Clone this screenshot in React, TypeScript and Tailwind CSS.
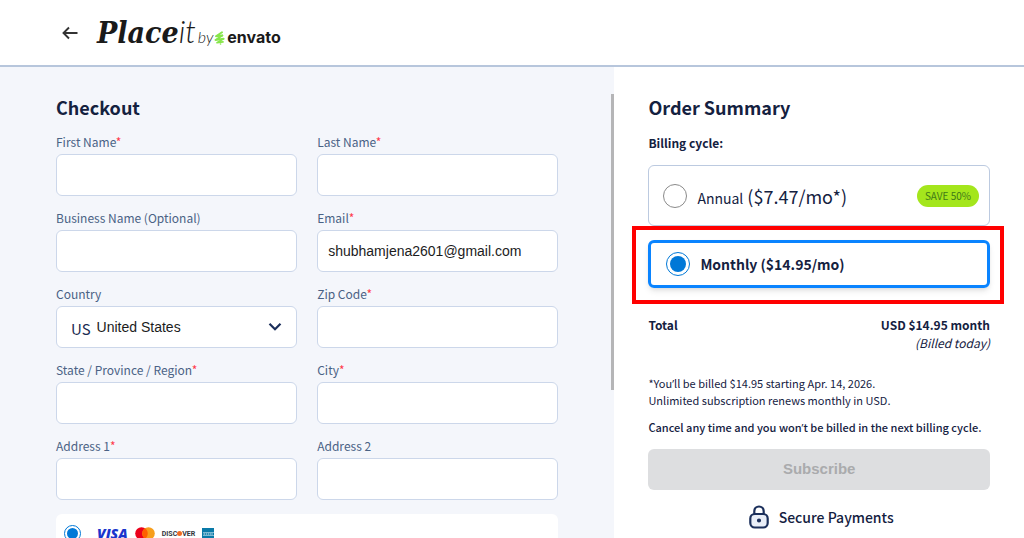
import React, { useState } from 'react';
import { clsx } from 'clsx';

interface FieldProps {
  id: string;
  label: string;
  required?: boolean;
  type?: string;
  defaultValue?: string;
}

type Cycle = 'annual' | 'monthly';

const FIELDS_TOP: FieldProps[] = [
  { id: 'first-name', label: 'First Name', required: true },
  { id: 'last-name', label: 'Last Name', required: true },
  { id: 'business', label: 'Business Name (Optional)' },
  { id: 'email', label: 'Email', required: true, type: 'email', defaultValue: 'shubhamjena2601@gmail.com' },
];

const FIELDS_BOTTOM: FieldProps[] = [
  { id: 'zip', label: 'Zip Code', required: true },
  { id: 'state', label: 'State / Province / Region', required: true },
  { id: 'city', label: 'City', required: true },
  { id: 'address-1', label: 'Address 1', required: true },
  { id: 'address-2', label: 'Address 2' },
];

const FieldLabel: React.FC<{ id: string; label: string; required?: boolean }> = ({ id, label, required }) => (
  <label htmlFor={id} className="h-6 text-xs leading-6 text-[#4a6285]">
    {label}
    {required && <span className="text-[#ff3b4b]">*</span>}
  </label>
);

const Field: React.FC<FieldProps> = ({ id, label, required, type = 'text', defaultValue }) => (
  <div className="flex flex-col">
    <FieldLabel id={id} label={label} required={required} />
    <input
      id={id}
      type={type}
      defaultValue={defaultValue}
      className="h-[42px] w-full rounded-md border border-[#ccd7ea] bg-white px-2.5 font-['Liberation_Sans',sans-serif] text-sm text-[#1c1c1c] outline-none focus:border-[#0a84ff]"
    />
  </div>
);

const CountryField = () => (
  <div className="flex flex-col">
    <FieldLabel id="country" label="Country" />
    <div className="relative flex h-[42px] items-center rounded-md border border-[#ccd7ea] bg-white pl-3.5">
      <span className="pt-1 text-[15px] leading-5 text-[#1b2b52]">US</span>
      <select
        id="country"
        className="h-full flex-1 appearance-none bg-transparent pl-1.5 font-['Liberation_Sans',sans-serif] text-sm text-[#1c1c1c] outline-none"
      >
        <option>United States</option>
        <option>Canada</option>
        <option>Mexico</option>
      </select>
      <svg viewBox="0 0 14 10" className="pointer-events-none absolute right-3.5 h-2.5 w-3.5" fill="none" stroke="#1b2f5b" strokeWidth="2.2">
        <path d="M1.500 1.800 7 7.300l5.500-5.500" />
      </svg>
    </div>
  </div>
);

const Logo = () => (
  <a href="#home" aria-label="Placeit by Envato" className="mt-0.5 flex items-baseline text-[#1a1a1a]">
    <span className="font-['DejaVu_Serif_Condensed','DejaVu_Serif',serif] text-[30px] leading-9 font-bold italic">Place</span>
    <span className="font-['Lato',sans-serif] text-[31px] leading-9 font-light italic">it</span>
    <span className="ml-0.5 font-['Lato',sans-serif] text-base leading-9 font-light italic">by</span>
    <svg viewBox="0 0 11 14" className="ml-px h-3.5 w-[11px] translate-y-0.5" fill="none" stroke="#87e64b" strokeLinecap="round" strokeLinejoin="round">
      <path d="M8 1.200 2 5.300l6.300-.8" strokeWidth="1.900" />
      <path d="M8.300 4.500 1.500 9l8-1.200" strokeWidth="2" />
      <path d="M9.500 7.800 3 11.700l6-.9" strokeWidth="1.700" />
      <path d="M6.500 13h.1" strokeWidth="1.600" />
    </svg>
    <span className="ml-0.5 font-['Inter',sans-serif] text-base leading-9 font-bold">envato</span>
  </a>
);

const RADIO =
  'grid shrink-0 appearance-none place-items-center rounded-full border border-[#8a8a8a] bg-white checked:border-[#0078d7] before:rounded-full checked:before:bg-[#0078d7]';

const CardLogos = () => (
  <div className="flex items-center">
    <span className="font-['Open_Sans',sans-serif] text-sm leading-4 font-extrabold text-[#1a35cc] italic">VISA</span>
    <svg viewBox="0 0 20 13" className="ml-[7px] h-[13px] w-5">
      <circle cx="6.500" cy="6.500" r="6.300" fill="#eb001b" />
      <circle cx="13.500" cy="6.500" r="6.300" fill="#f79e1b" />
      <path d="M10 1.300a6.300 6.300 0 0 1 0 10.400 6.300 6.300 0 0 1 0-10.400" fill="#ff5f00" />
    </svg>
    <span className="ml-[7px] flex items-center font-['Roboto',sans-serif] text-[7px] leading-4 font-bold text-[#33363c]">
      DISC
      <span className="h-[5px] w-[5px] rounded-full bg-[#f26a21]" />
      VER
    </span>
    <svg viewBox="0 0 12 12" className="ml-[7px] h-3 w-3">
      <path d="M0 0h12v12H0z" fill="#0a7aa8" />
      <path d="M1 4.500h11M1 7.500h11" stroke="#cfe6f0" strokeWidth=".6" />
      <path d="M1.500 6h9.500" stroke="#d9eef6" strokeWidth="1.200" strokeDasharray="1.500 .7" />
    </svg>
  </div>
);

// The body font draws the curly apostrophe full width
const Apostrophe = () => <span className="font-['Open_Sans',sans-serif]">’</span>;

export default function App() {
  const [cycle, setCycle] = useState<Cycle>('monthly');

  return (
    <div className="flex h-screen flex-col overflow-hidden bg-white font-['Noto_Sans_CJK_SC',sans-serif] text-[#14213f]">
      <header className="flex h-[67px] shrink-0 items-center border-b-2 border-[#b7c6dc] pl-[62px]">
        <button type="button" aria-label="Back" className="mr-[19px]">
          <svg viewBox="0 0 16 14" className="h-3.5 w-4" fill="none" stroke="#333" strokeWidth="1.900">
            <path d="M15.500 7H1.500M7 1.500 1.500 7 7 12.500" />
          </svg>
        </button>
        <Logo />
      </header>

      <main className="flex min-h-0 flex-1">
        <section className="relative w-3/5 bg-[#f4f6fb]">
          <div className="h-full overflow-y-auto px-14 pt-7 [scrollbar-width:none]">
            <h1 className="text-lg leading-6 font-bold">Checkout</h1>
            <form className="mt-[11px] grid grid-cols-2 gap-x-5 gap-y-2.5">
              {FIELDS_TOP.map(field => <Field key={field.id} {...field} />)}
              <CountryField />
              {FIELDS_BOTTOM.map(field => <Field key={field.id} {...field} />)}
            </form>

            {/* Payment method */}
            <div className="mt-3.5 rounded-md bg-white px-2 pt-[11px] pb-10">
              <label className="flex items-center gap-4">
                <input
                  type="radio"
                  name="payment"
                  aria-label="Credit card"
                  defaultChecked
                  className={clsx(RADIO, 'h-[17px] w-[17px] before:h-[11px] before:w-[11px]')}
                />
                <CardLogos />
              </label>
            </div>
          </div>
          <div className="absolute top-[27px] right-0 h-[296px] w-[3px] bg-[#b5b5b7]" />
        </section>

        <aside className="flex w-2/5 flex-col px-[34px] pt-7">
          <h2 className="text-lg leading-6 font-bold">Order Summary</h2>
          <p className="mt-3.5 text-xs leading-5 font-bold">Billing cycle:</p>

          <label className="mt-3 flex h-[61px] shrink-0 items-center rounded-md border border-[#bccae0] pr-2.5 pl-3.5">
            <input
              type="radio"
              name="cycle"
              checked={cycle === 'annual'}
              onChange={() => setCycle('annual')}
              className={clsx(RADIO, 'h-6 w-6 before:h-4 before:w-4')}
            />
            <span className="ml-2.5 flex flex-1 items-baseline gap-1 leading-6">
              <span className="text-sm">Annual</span>
              <span className="text-lg leading-6">($7.47/mo*)</span>
            </span>
            <span className="rounded-full bg-[#a4e61c] px-2 text-[10px] leading-[22px] text-[#3f7a17]">SAVE 50%</span>
          </label>

          <div className="relative mt-3.5 shrink-0">
            <label className="flex h-12 items-center rounded-md border-3 border-[#0a84ff] pl-[15px] shadow-md">
              <input
                type="radio"
                name="cycle"
                checked={cycle === 'monthly'}
                onChange={() => setCycle('monthly')}
                className={clsx(RADIO, 'h-6 w-6 before:h-4 before:w-4')}
              />
              <span className="ml-2.5 text-sm leading-6 font-bold">Monthly ($14.95/mo)</span>
            </label>
            <div className="pointer-events-none absolute -top-3.5 -right-3.5 -bottom-4 -left-4 border-4 border-[#ff0000]" />
          </div>

          <div className="mt-7 flex justify-between text-xs leading-[18px]">
            <span className="font-bold">Total</span>
            <div className="text-right">
              <p className="font-bold">USD $14.95 month</p>
              <p className="italic">(Billed today)</p>
            </div>
          </div>

          <p className="mt-[23px] text-[11px] leading-4">
            *You<Apostrophe />ll be billed $14.95 starting Apr. 14, 2026.
            <br />
            Unlimited subscription renews monthly in USD.
          </p>
          <p className="mt-[11px] text-[11px] leading-4 font-medium whitespace-nowrap">
            Cancel any time and you won<Apostrophe />t be billed in the next billing cycle.
          </p>

          <button
            type="button"
            disabled
            className="mt-[13px] h-[41px] shrink-0 rounded-md bg-[#dddee0] font-['Liberation_Sans',sans-serif] text-[15px] font-bold text-[#aaabad]"
          >
            Subscribe
          </button>

          <div className="mt-[15px] flex items-center justify-center gap-2.5 pl-1">
            <svg viewBox="0 0 20 24" className="h-6 w-5" fill="none" stroke="#1b2f5b" strokeWidth="2.200">
              <path d="M5.300 9.500V6.200a4.700 4.700 0 0 1 9.400 0v3.300" />
              <rect x="1.300" y="9" width="17.400" height="13.500" rx="4.500" fill="#e9eef8" />
              <circle cx="10" cy="15.500" r="1" fill="#1b2f5b" />
            </svg>
            <span className="text-sm leading-6 font-medium">Secure Payments</span>
          </div>
        </aside>
      </main>
    </div>
  );
}
